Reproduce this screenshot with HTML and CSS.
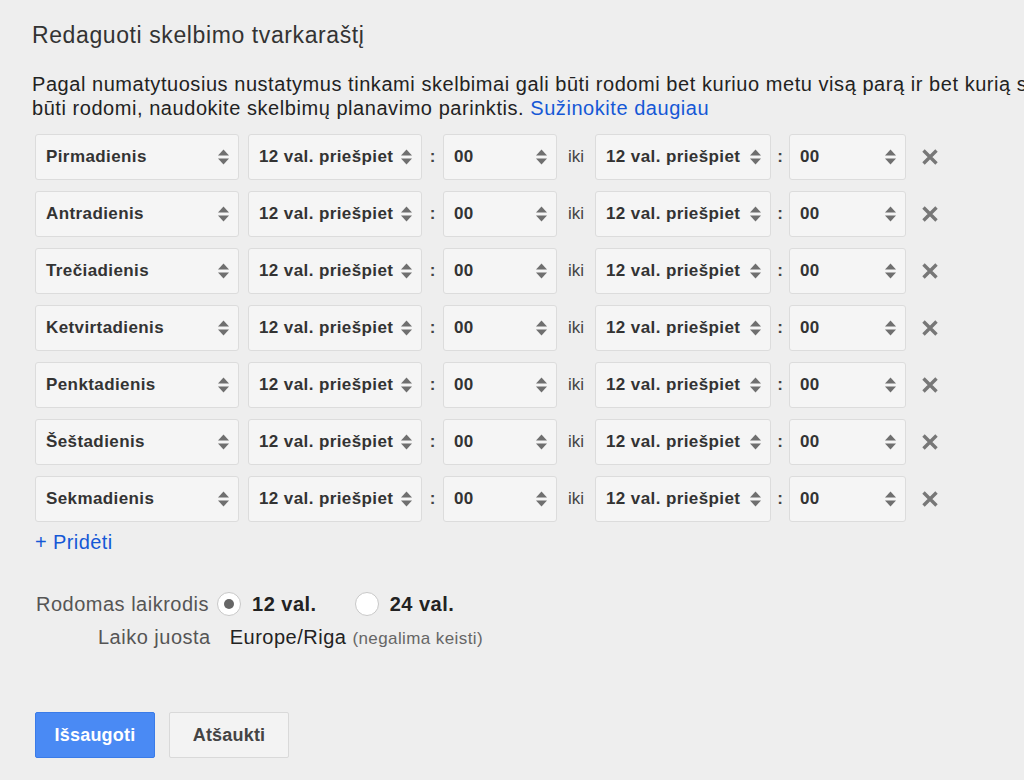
FILE: index.html
```html
<!DOCTYPE html>
<html lang="lt">
<head>
<meta charset="utf-8">
<link rel="stylesheet" href="styles.css">
</head>
<body>
<div class="page">
  <h1 class="title">Redaguoti skelbimo tvarkaraštį</h1>
  <p class="intro"><span class="line">Pagal numatytuosius nustatymus tinkami skelbimai gali būti rodomi bet kuriuo metu visą parą ir bet kurią savaitės dieną. Norėdami nurodyti, kada jūsų skelbimai turi</span><span class="line">būti rodomi, naudokite skelbimų planavimo parinktis. <a class="link" href="#">Sužinokite daugiau</a></span></p>

  <div class="rows" id="rows"></div>

  <a class="add" href="#">+ Pridėti</a>

  <div class="clock">
    <span class="label">Rodomas laikrodis</span>
    <span class="radio checked"></span><span class="opt">12 val.</span>
    <span class="radio r2"></span><span class="opt">24 val.</span>
  </div>
  <div class="zone">
    <span class="label">Laiko juosta</span>
    <span class="zone-val">Europe/Riga</span>
    <span class="zone-note">(negalima keisti)</span>
  </div>

  <div class="buttons">
    <button class="btn primary">Išsaugoti</button>
    <button class="btn">Atšaukti</button>
  </div>
</div>
<script>
  var days = ["Pirmadienis","Antradienis","Trečiadienis","Ketvirtadienis","Penktadienis","Šeštadienis","Sekmadienis"];
  var arrow = '<svg class="arrow" width="13" height="18" viewBox="0 0 13 18"><path d="M6.5 1.5 L12 7.5 H1 Z" fill="#6f6f6f"/><path d="M1 10.5 H12 L6.5 16.5 Z" fill="#6f6f6f"/></svg>';
  function sel(cls, text){ return '<div class="sel ' + cls + '"><span>' + text + '</span>' + arrow + '</div>'; }
  var html = '';
  days.forEach(function(d){
    html += '<div class="row">' +
      sel('day', d) +
      sel('hour', '12 val. priešpiet') +
      '<span class="colon">:</span>' +
      sel('min', '00') +
      '<span class="iki">iki</span>' +
      sel('hour h2', '12 val. priešpiet') +
      '<span class="colon c2">:</span>' +
      sel('min m2', '00') +
      '<svg class="x" width="18" height="18" viewBox="0 0 18 18"><path d="M2.5 2.5 L15.5 15.5 M15.5 2.5 L2.5 15.5" stroke="#777" stroke-width="3.4"/></svg>' +
      '</div>';
  });
  document.getElementById('rows').innerHTML = html;
</script>
</body>
</html>
```

FILE: styles.css
```css
html, body {
  margin: 0;
  padding: 0;
  background: #eeeeee;
  overflow: hidden;
  width: 1024px;
  height: 780px;
}
body {
  font-family: "Liberation Sans", Arial, sans-serif;
  color: #222;
}
.page {
  padding: 22px 0 0 32px;
  display: flex;
  flex-direction: column;
  align-items: flex-start;
}
.title {
  margin: 0;
  font-size: 23px;
  letter-spacing: 0.6px;
  line-height: 26px;
  font-weight: normal;
  color: #333;
}
.intro {
  margin: 24px 0 0 0;
  font-size: 20px;
  letter-spacing: 0.55px;
  line-height: 24px;
  color: #222;
  white-space: nowrap;
}
.intro .line { display: block; }
.link { color: #1558d6; text-decoration: none; }
.rows {
  margin: 14px 0 0 3px;
  display: flex;
  flex-direction: column;
  gap: 11px;
}
.row {
  display: flex;
  align-items: center;
  height: 46px;
}
.sel {
  box-sizing: border-box;
  height: 46px;
  background: #f5f5f5;
  border: 1px solid #dcdcdc;
  border-radius: 3px;
  display: flex;
  align-items: center;
  justify-content: space-between;
  padding: 0 8px 0 10px;
  font-size: 17px;
  letter-spacing: 0.4px;
  font-weight: bold;
  color: #333;
}
.sel .arrow { flex: none; }
.day { width: 204px; margin-right: 9px; }
.hour { width: 174px; }
.h2 { width: 176px; }
.min { width: 114px; }
.m2 { width: 117px; }
.colon {
  width: 21px;
  text-align: center;
  font-size: 17px;
  font-weight: bold;
  color: #444;
}
.colon.c2 { width: 18px; }
.iki {
  width: 38px;
  text-align: center;
  font-size: 17px;
  color: #444;
}
.x { margin-left: 15px; }
.add {
  margin: 8px 0 0 3px;
  font-size: 20px;
  letter-spacing: 0.4px;
  line-height: 24px;
  color: #1558d6;
  text-decoration: none;
}
.clock {
  margin: 38px 0 0 4px;
  display: flex;
  align-items: center;
  height: 24px;
  font-size: 20px;
  letter-spacing: 0.5px;
}
.label { color: #555; }
.radio {
  box-sizing: border-box;
  width: 24px;
  height: 24px;
  border-radius: 50%;
  background: #fff;
  border: 1px solid #c8c8c8;
  margin-left: 8px;
  position: relative;
}
.radio.r2 { margin-left: 0; }
.radio.checked::after {
  content: "";
  position: absolute;
  left: 6px;
  top: 6px;
  width: 10px;
  height: 10px;
  border-radius: 50%;
  background: #666;
}
.opt {
  font-weight: bold;
  color: #222;
  margin-left: 11px;
  margin-right: 38px;
}
.zone {
  margin: 9px 0 0 66px;
  display: flex;
  align-items: baseline;
  height: 24px;
  line-height: 24px;
  font-size: 20px;
  letter-spacing: 0.5px;
}
.zone-val { margin-left: 19px; color: #222; }
.zone-note { margin-left: 6px; font-size: 17px; letter-spacing: 0.4px; color: #666; }
.buttons {
  margin: 63px 0 0 3px;
  display: flex;
  gap: 14px;
}
.btn {
  box-sizing: border-box;
  height: 46px;
  width: 120px;
  border-radius: 2px;
  font-family: "Liberation Sans", Arial, sans-serif;
  font-size: 18px;
  letter-spacing: 0.2px;
  font-weight: bold;
  background: #f3f3f3;
  border: 1px solid #d9d9d9;
  color: #444;
}
.btn.primary {
  background: #4a8af4;
  border: 1px solid #3a7be8;
  color: #fff;
}
```
